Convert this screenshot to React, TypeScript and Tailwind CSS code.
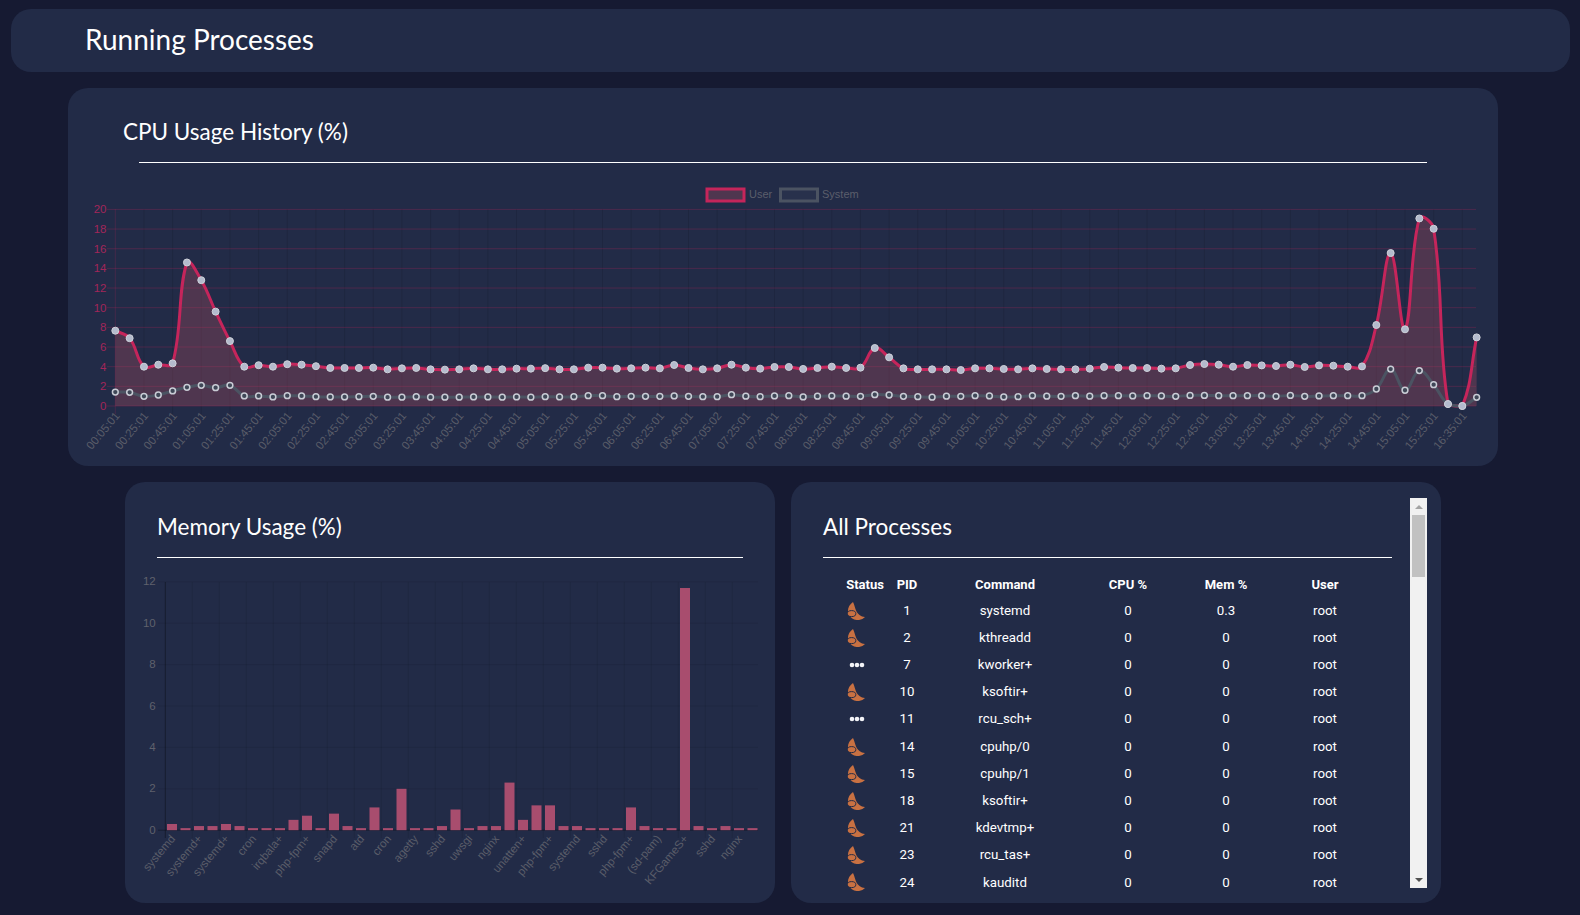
const user = [7.66, 6.9, 4.0, 4.2, 4.34, 14.6, 12.8, 9.6, 6.6, 4.0, 4.15, 4.0, 4.25, 4.2, 4.05, 3.87, 3.87, 3.87, 3.9, 3.73, 3.83, 3.87, 3.73, 3.7, 3.73, 3.83, 3.73, 3.73, 3.8, 3.8, 3.85, 3.73, 3.73, 3.9, 3.9, 3.8, 3.83, 3.9, 3.83, 4.17, 3.87, 3.73, 3.83, 4.2, 3.9, 3.8, 3.97, 3.97, 3.77, 3.87, 4.0, 3.87, 3.9, 5.9, 4.95, 3.83, 3.73, 3.73, 3.73, 3.66, 3.83, 3.83, 3.77, 3.73, 3.83, 3.77, 3.73, 3.73, 3.8, 3.97, 3.9, 3.86, 3.86, 3.8, 3.83, 4.17, 4.27, 4.2, 4.0, 4.17, 4.13, 4.07, 4.2, 3.97, 4.13, 4.1, 4.0, 4.03, 8.24, 15.56, 7.8, 19.08, 18.03, 0.2, 0, 6.98]
const system = [1.42, 1.39, 0.98, 1.12, 1.53, 1.9, 2.1, 1.86, 2.1, 1.02, 1.02, 0.92, 1.05, 1.02, 0.95, 0.92, 0.92, 0.95, 0.98, 0.9, 0.9, 0.95, 0.9, 0.9, 0.9, 0.92, 0.92, 0.9, 0.92, 0.9, 0.95, 0.92, 0.95, 1.05, 1.05, 0.95, 0.98, 0.98, 0.98, 1.02, 0.98, 0.95, 0.95, 1.15, 1.0, 0.95, 1.02, 1.05, 0.92, 1.0, 1.02, 1.0, 0.98, 1.15, 1.12, 0.98, 0.95, 0.9, 1.0, 0.98, 1.05, 1.02, 0.92, 0.95, 1.05, 1.0, 0.98, 1.05, 1.0, 1.05, 1.05, 1.02, 1.05, 1.02, 0.98, 1.08, 1.08, 1.05, 1.05, 1.05, 1.05, 0.98, 1.08, 0.98, 1.02, 1.05, 1.05, 1.05, 1.73, 3.76, 1.6, 3.6, 2.17, 0.2, 0, 0.88]
const cpuLabels = ['00:05:01', '00:25:01', '00:45:01', '01:05:01', '01:25:01', '01:45:01', '02:05:01', '02:25:01', '02:45:01', '03:05:01', '03:25:01', '03:45:01', '04:05:01', '04:25:01', '04:45:01', '05:05:01', '05:25:01', '05:45:01', '06:05:01', '06:25:01', '06:45:01', '07:05:02', '07:25:01', '07:45:01', '08:05:01', '08:25:01', '08:45:01', '09:05:01', '09:25:01', '09:45:01', '10:05:01', '10:25:01', '10:45:01', '11:05:01', '11:25:01', '11:45:01', '12:05:01', '12:25:01', '12:45:01', '13:05:01', '13:25:01', '13:45:01', '14:05:01', '14:25:01', '14:45:01', '15:05:01', '15:25:01', '16:35:01']

const memory = [0.3, 0.1, 0.2, 0.2, 0.3, 0.2, 0.1, 0.1, 0.1, 0.5, 0.7, 0.1, 0.8, 0.2, 0.1, 1.1, 0.1, 2.0, 0.1, 0.1, 0.2, 1.0, 0.1, 0.2, 0.2, 2.3, 0.5, 1.2, 1.2, 0.2, 0.2, 0.1, 0.1, 0.1, 1.1, 0.2, 0.1, 0.1, 11.7, 0.2, 0.1, 0.2, 0.1, 0.1]
const memLabels = ['systemd', 'systemd+', 'systemd+', 'cron', 'irqbala+', 'php-fpm+', 'snapd', 'atd', 'cron', 'agetty', 'sshd', 'uwsgi', 'nginx', 'unatten+', 'php-fpm+', 'systemd', 'sshd', 'php-fpm+', '(sd-pam)', 'KFGameS+', 'sshd', 'nginx']

const processes = [
  { status: 'sleep', pid: 1, command: 'systemd', mem: '0.3' },
  { status: 'sleep', pid: 2, command: 'kthreadd', mem: '0' },
  { status: 'idle', pid: 7, command: 'kworker+', mem: '0' },
  { status: 'sleep', pid: 10, command: 'ksoftir+', mem: '0' },
  { status: 'idle', pid: 11, command: 'rcu_sch+', mem: '0' },
  { status: 'sleep', pid: 14, command: 'cpuhp/0', mem: '0' },
  { status: 'sleep', pid: 15, command: 'cpuhp/1', mem: '0' },
  { status: 'sleep', pid: 18, command: 'ksoftir+', mem: '0' },
  { status: 'sleep', pid: 21, command: 'kdevtmp+', mem: '0' },
  { status: 'sleep', pid: 23, command: 'rcu_tas+', mem: '0' },
  { status: 'sleep', pid: 24, command: 'kauditd', mem: '0' },
]

const CPU_LEFT = 115.3
const CPU_STEP = 14.33
const CPU_ZERO = 406
const CPU_UNIT = 9.83

const cx = (i: number) => CPU_LEFT + CPU_STEP * i
const cy = (v: number) => CPU_ZERO - CPU_UNIT * v

// same bezier as chart.js line tension 0.4
function spline(values: number[]) {
  const pts = values.map((v, i) => [cx(i), cy(v)])
  const ctrl = pts.map((p, i) => {
    const prev = pts[Math.max(i - 1, 0)]
    const next = pts[Math.min(i + 1, pts.length - 1)]
    const d01 = Math.hypot(p[0] - prev[0], p[1] - prev[1])
    const d12 = Math.hypot(next[0] - p[0], next[1] - p[1])
    const total = d01 + d12 || 1
    const fa = (0.4 * d01) / total
    const fb = (0.4 * d12) / total
    return {
      px: p[0] - fa * (next[0] - prev[0]),
      py: Math.min(p[1] - fa * (next[1] - prev[1]), CPU_ZERO),
      nx: p[0] + fb * (next[0] - prev[0]),
      ny: Math.min(p[1] + fb * (next[1] - prev[1]), CPU_ZERO),
    }
  })
  let d = `M${pts[0][0]} ${pts[0][1]}`
  for (let i = 1; i < pts.length; i++) {
    d += ` C${ctrl[i - 1].nx} ${ctrl[i - 1].ny} ${ctrl[i].px} ${ctrl[i].py} ${pts[i][0]} ${pts[i][1]}`
  }
  return d
}

function CpuChart() {
  const userLine = spline(user)
  const systemLine = spline(system)
  const close = ` L${cx(95)} ${CPU_ZERO} L${cx(0)} ${CPU_ZERO} Z`
  return (
    <svg viewBox="68 163 1430 303" className="block h-[303px] w-[1430px]" style={{ fontFamily: '"Liberation Sans", Arial, sans-serif' }}>
      <rect x="707" y="189" width="37" height="12" fill="rgba(187,80,100,0.3)" stroke="#c5255b" strokeWidth="3" />
      <text x="749" y="198" fontSize="11" fill="#5b5e6b">User</text>
      <rect x="780.5" y="189" width="37" height="12" fill="rgba(255,255,255,0.03)" stroke="#4b5362" strokeWidth="3" />
      <text x="822" y="198" fontSize="11" fill="#5b5e6b">System</text>

      {cpuLabels.map((label, i) => (
        <line key={label} x1={cx(i * 2)} x2={cx(i * 2)} y1={209} y2={414} stroke={i === 0 ? 'rgba(201,35,92,0.2)' : 'rgba(0,0,0,0.1)'} />
      ))}
      {[0, 2, 4, 6, 8, 10, 12, 14, 16, 18, 20].map((v) => (
        <g key={v}>
          <line x1={107} x2={1476} y1={cy(v)} y2={cy(v)} stroke="rgba(201,35,92,0.25)" />
          <text x={106.5} y={cy(v) + 4} fontSize="11.5" textAnchor="end" fill="#a3265a">{v}</text>
        </g>
      ))}

      <path d={userLine + close} fill="rgba(187,80,100,0.3)" />
      <path d={userLine} fill="none" stroke="#c5255b" strokeWidth="3" />
      <path d={systemLine} fill="none" stroke="#4b5362" strokeWidth="3" />
      {system.map((v, i) => (
        <circle key={i} cx={cx(i)} cy={cy(v)} r="2.9" fill="#3f4757" stroke="#c9ccd5" strokeWidth="1.5" />
      ))}
      {user.map((v, i) => (
        <circle key={i} cx={cx(i)} cy={cy(v)} r="3.5" fill="#b4bbcd" stroke="#cfd2da" strokeWidth="1" />
      ))}

      {cpuLabels.map((label, i) => (
        <text key={label} transform={`translate(${cx(i * 2) + 5} 416) rotate(-50)`} fontSize="11.5" textAnchor="end" fill="#5a5d69">{label}</text>
      ))}
    </svg>
  )
}

const MEM_LEFT = 165.3
const MEM_STEP = 13.5
const MEM_ZERO = 830.2
const MEM_UNIT = 20.7

function MemoryChart() {
  return (
    <svg viewBox="125 558 650 345" className="block h-[345px] w-[650px]" style={{ fontFamily: '"Liberation Sans", Arial, sans-serif' }}>
      {memLabels.map((label, i) => {
        const x = MEM_LEFT + MEM_STEP * 2 * i
        return <line key={i} x1={x} x2={x} y1={582} y2={838} stroke={i === 0 ? 'rgba(0,0,0,0.35)' : 'rgba(0,0,0,0.08)'} />
      })}
      {[0, 2, 4, 6, 8, 10, 12].map((v) => (
        <g key={v}>
          <line x1={158} x2={758} y1={MEM_ZERO - MEM_UNIT * v} y2={MEM_ZERO - MEM_UNIT * v} stroke={v === 0 ? 'rgba(0,0,0,0.3)' : 'rgba(0,0,0,0.08)'} />
          <text x={155.7} y={MEM_ZERO - MEM_UNIT * v + 3.5} fontSize="11.5" textAnchor="end" fill="#5f616c">{v}</text>
        </g>
      ))}
      {memory.map((v, i) => (
        <rect key={i} x={MEM_LEFT + MEM_STEP * i + 1.7} y={MEM_ZERO - MEM_UNIT * v} width="10" height={MEM_UNIT * v} fill="#a84d6e" />
      ))}
      {memLabels.map((label, i) => (
        <text key={i} transform={`translate(${MEM_LEFT + MEM_STEP * 2 * i + 10.5} 839) rotate(-50)`} fontSize="11.5" textAnchor="end" fill="#5a5d69">{label}</text>
      ))}
    </svg>
  )
}

function SleepIcon() {
  return (
    <svg viewBox="0 0 18 18" className="block h-[18px] w-[18px]">
      <path d="M6 0C1.5 3 0 8 1.5 12C3.5 16.5 8 18.5 12 18C14.5 17.7 16.5 16.5 18 15C14 15 10.5 12 9 8.5C8 6 7.5 3 6 0Z" fill="#c97142" />
      <ellipse cx="4.6" cy="11.6" rx="4.2" ry="3" fill="#c97142" stroke="#222b47" strokeWidth="1" />
    </svg>
  )
}

function IdleIcon() {
  return (
    <svg viewBox="0 0 18 6" className="block h-[6px] w-[18px]">
      <circle cx="5" cy="3" r="2.3" fill="#f2f3f7" />
      <circle cx="10" cy="3" r="2.3" fill="#f2f3f7" />
      <circle cx="15" cy="3" r="2.3" fill="#f2f3f7" />
    </svg>
  )
}

export default function App() {
  return (
    <div className="min-h-[915px] bg-[#161a32] pb-[12px] pt-[9px] text-white" style={{ fontFamily: 'Lato, "Noto Sans", sans-serif' }}>
      <header className="ml-[11px] mr-[10px] flex h-[63px] items-center rounded-[20px] bg-[#222b47] pb-[4px] pl-[74px]">
        <h1 className="text-[28px] font-normal">Running Processes</h1>
      </header>

      <section className="ml-[68px] mr-[82px] mt-[16px] h-[378px] overflow-hidden rounded-[20px] bg-[#222b47] pt-[28px]">
        <h2 className="pl-[55px] text-[22.5px] font-normal leading-[32px]">CPU Usage History (%)</h2>
        <div className="mx-[71px] mt-[14px] h-px bg-white" />
        <CpuChart />
      </section>

      <div className="mt-[16px] flex gap-[16px] pl-[125px]">
        <section className="h-[421px] w-[650px] overflow-hidden rounded-[20px] bg-[#222b47] pt-[29px]">
          <h2 className="pl-[32px] text-[22.5px] font-normal leading-[32px]">Memory Usage (%)</h2>
          <div className="ml-[32px] mr-[32px] mt-[14px] h-px bg-white" />
          <MemoryChart />
        </section>

        <section className="flex h-[421px] w-[650px] rounded-[20px] bg-[#222b47] pb-[15px] pl-[32px] pr-[14px] pt-[16px]">
          <div className="min-w-0 flex-1 pr-[18px] pt-[13px]">
            <h2 className="text-[22.5px] font-normal leading-[32px]">All Processes</h2>
            <div className="mt-[14px] h-px bg-white" />
            <table className="ml-[20px] mt-[15px] table-fixed border-collapse text-center text-[13.3px]" style={{ fontFamily: 'Roboto, "Noto Sans", sans-serif' }}>
              <colgroup>
                <col className="w-[44px]" />
                <col className="w-[40px]" />
                <col className="w-[156px]" />
                <col className="w-[90px]" />
                <col className="w-[106px]" />
                <col className="w-[92px]" />
              </colgroup>
              <thead>
                <tr className="h-[24px] text-[13px] font-bold">
                  <th className="whitespace-nowrap p-0">Status</th>
                  <th className="p-0">PID</th>
                  <th className="p-0">Command</th>
                  <th className="p-0">CPU %</th>
                  <th className="p-0">Mem %</th>
                  <th className="p-0">User</th>
                </tr>
              </thead>
              <tbody>
                {processes.map((p) => (
                  <tr key={p.pid} className="h-[27.2px]">
                    <td className="p-0 pl-[4px]">{p.status === 'sleep' ? <SleepIcon /> : <IdleIcon />}</td>
                    <td className="p-0">{p.pid}</td>
                    <td className="p-0">{p.command}</td>
                    <td className="p-0">0</td>
                    <td className="p-0">{p.mem}</td>
                    <td className="p-0">root</td>
                  </tr>
                ))}
              </tbody>
            </table>
          </div>
          <div className="flex h-[390px] w-[17px] flex-none flex-col justify-between bg-[#f1f1f1]">
            <div>
              <div className="flex h-[17px] items-center justify-center">
                <svg viewBox="0 0 8 4" className="h-[4px] w-[8px]"><polygon points="4,0 8,4 0,4" fill="#a3a3a3" /></svg>
              </div>
              <div className="mx-[2px] h-[62px] bg-[#c1c1c1]" />
            </div>
            <div className="flex h-[17px] items-center justify-center">
              <svg viewBox="0 0 8 4" className="h-[4px] w-[8px]"><polygon points="0,0 8,0 4,4" fill="#505050" /></svg>
            </div>
          </div>
        </section>
      </div>
    </div>
  )
}
